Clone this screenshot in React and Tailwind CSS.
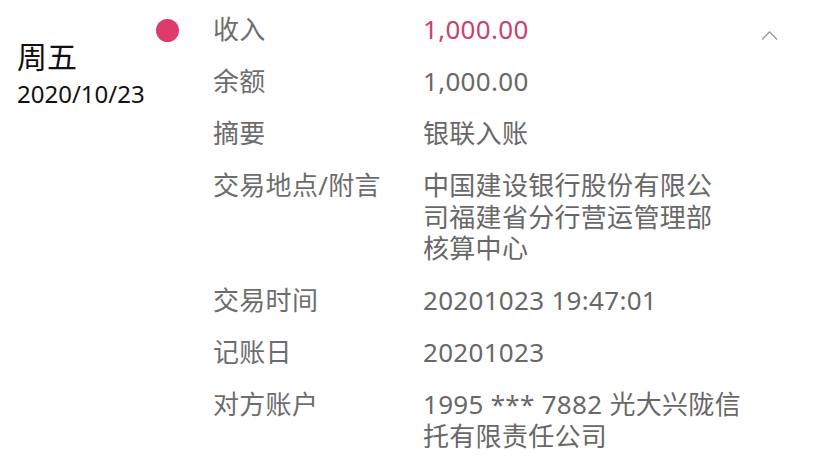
const rows = [
    { label: '收入', lines: ['1,000.00'], red: true },
    { label: '余额', lines: ['1,000.00'] },
    { label: '摘要', lines: ['银联入账'] },
    { label: '交易地点/附言', lines: ['中国建设银行股份有限公', '司福建省分行营运管理部', '核算中心'] },
    { label: '交易时间', lines: ['20201023 19:47:01'] },
    { label: '记账日', lines: ['20201023'] },
    { label: '对方账户', lines: ['1995 *** 7882 光大兴陇信', '托有限责任公司'] },
]

export default function App() {
    return (
        <div
            className="w-[828px] h-[467px] overflow-hidden bg-white flex pt-[14px]"
            style={{ fontFamily: '"Noto Sans", "Noto Sans CJK SC", sans-serif' }}
        >
            {/* 日期 */}
            <div className="w-[156px] pl-[17px] pt-[25px] shrink-0">
                <div className="text-[30px] leading-[36px] text-[#111]">周五</div>
                <div className="text-[24px] leading-[30px] mt-[4px] text-[#111]">2020/10/23</div>
            </div>

            {/* 标记点 */}
            <div className="w-[57px] shrink-0 pt-[4.5px]">
                <div className="w-[23px] h-[23px] rounded-full bg-[#dc3b6b]" />
            </div>

            {/* 明细 */}
            <div className="grid grid-cols-[210px_auto] gap-y-[20.5px] text-[26px] leading-[31.5px] tracking-[0.3px] content-start">
                {rows.map(r => (
                    <div key={r.label} className="contents">
                        <div className="text-[#6d6d6d] whitespace-nowrap">{r.label}</div>
                        <div className={r.red ? 'text-[#c9426f]' : 'text-[#686868]'}>
                            {r.lines.map(l => (
                                <div key={l} className="whitespace-nowrap">{l}</div>
                            ))}
                        </div>
                    </div>
                ))}
            </div>

            <div className="ml-auto mr-[50px] pt-[16px] shrink-0">
                <svg width="17" height="10" viewBox="0 0 17 10" fill="none">
                    <path d="M1 9.5 L8.5 2 L16 9.5" stroke="#9a9a9a" strokeWidth="1.4" />
                </svg>
            </div>
        </div>
    )
}
